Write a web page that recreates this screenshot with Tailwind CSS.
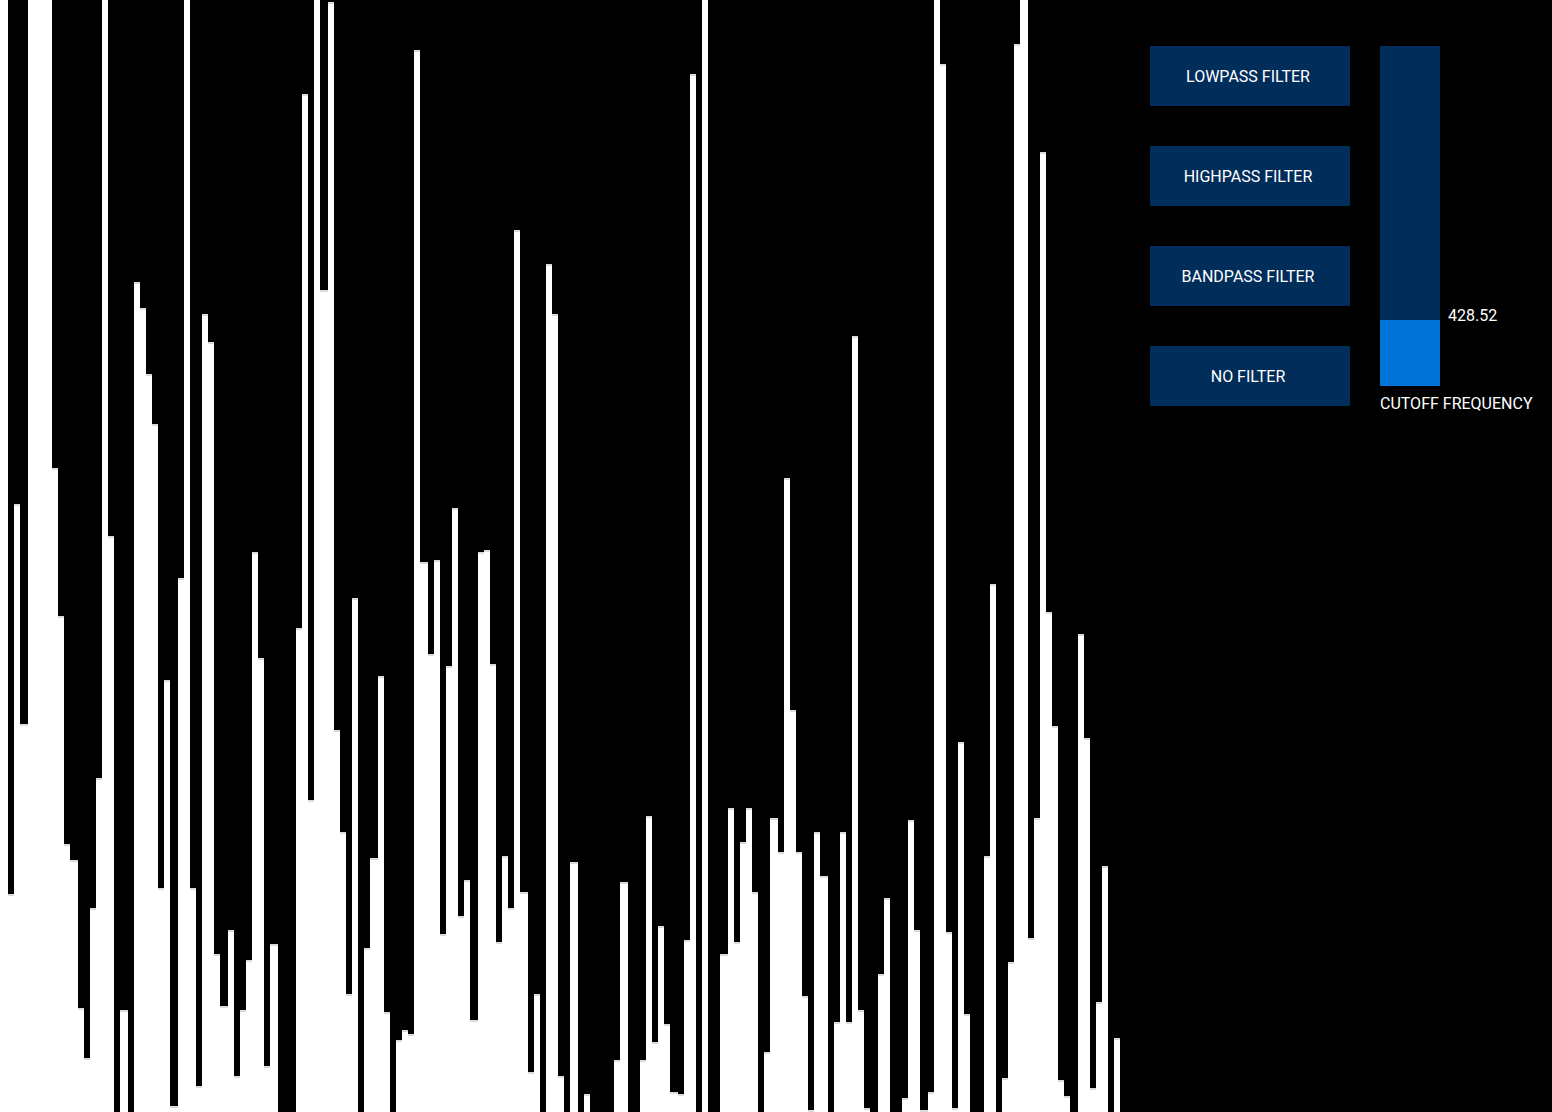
<!DOCTYPE html>
<html lang="en">

<head>
    <meta charset="UTF-8">
    <meta name="viewport" content="width=device-width, initial-scale=1.0">
    <title>Audio Filters</title>
    <script src="https://cdn.jsdelivr.net/npm/@tailwindcss/browser@4"></script>
</head>

<body class="bg-black text-white text-base font-['Roboto',sans-serif]">
    <main class="flex min-h-screen overflow-hidden">
        <!-- Frequency spectrum -->
        <div id="spectrum" class="flex shrink-0 h-screen overflow-hidden" role="img" aria-label="Frequency spectrum"></div>

        <!-- Filter controls -->
        <section class="flex items-start gap-[30px] pl-[30px] pt-[46px]">
            <div class="flex flex-col gap-10">
                <button type="button" class="w-[200px] h-[60px] pt-0.5 pr-1 bg-[#002d5a] hover:bg-[#0074d9]">LOWPASS FILTER</button>
                <button type="button" class="w-[200px] h-[60px] pt-0.5 pr-1 bg-[#002d5a] hover:bg-[#0074d9]">HIGHPASS FILTER</button>
                <button type="button" class="w-[200px] h-[60px] pt-0.5 pr-1 bg-[#002d5a] hover:bg-[#0074d9]">BANDPASS FILTER</button>
                <button type="button" class="w-[200px] h-[60px] pt-0.5 pr-1 bg-[#002d5a] hover:bg-[#0074d9]">NO FILTER</button>
            </div>
            <div class="flex flex-col items-start gap-[6px]">
                <div class="relative">
                    <input id="cutoff" type="range" min="50" max="2000" step="any" value="428.52" class="block w-[60px] h-[340px] appearance-none [writing-mode:vertical-lr] [direction:rtl] [&::-webkit-slider-thumb]:opacity-0">
                    <output id="cutoff_value" for="cutoff" class="absolute left-full ml-2 -mb-2">428.52</output>
                </div>
                <label for="cutoff" class="whitespace-nowrap">CUTOFF FREQUENCY</label>
            </div>
        </section>
    </main>

    <script>
        // Top edge of each band, null when the band is silent
        const bands = [
            0, 894, 504, 724,
            0, 0, 0, 0, 468, 616, 844, 860,
            1008, 1058, 908, 778, 0, 536, null, 1010,
            null, 282, 308, 374, 424, 888, 680, 1106,
            578, 0, 888, 1086, 314, 342, 954, 1006,
            930, 1076, 1010, 960, 552, 658, 1066, 944,
            null, null, null, 628, 94, 800, 0, 290,
            2, 730, 832, 994, 598, null, 948, 858,
            676, 1012, null, 1040, 1030, 1034, 50, 562,
            654, 560, 934, 666, 508, 916, 880, 1020,
            552, 550, 664, 942, 856, 908, 230, 892,
            1072, 994, null, 264, 314, 1076, null, 862,
            null, 1094, null, null, null, null, 1060, 882,
            null, null, 1060, 816, 1042, 926, 1024, 1092,
            1094, 940, 74, null, 0, null, null, 954,
            808, 942, 842, 808, 892, null, 1052, 818,
            852, 478, 710, 852, 996, 1110, 832, 876,
            null, 1022, 832, 1022, 336, 1010, 1108, null,
            974, 898, null, null, 1098, 820, 930, 1110,
            1092, 0, 64, 932, 1108, 742, 1014, null,
            null, 856, 584, null, 1078, 962, 44, 0,
            938, 818, 152, 612, 726, 1080, 1096, null,
            634, 738, 1088, 1002, 866, null, 1038
        ];

        const spectrum = document.getElementById('spectrum');
        bands.forEach((top, i) => {
            const bar = document.createElement('div');
            // Every eighth band is a little wider
            bar.style.width = (i === 0 || i % 8 === 3 ? 8 : 6) + 'px';
            if (top !== null) {
                bar.className = top > 0 ? 'bg-white border-t-2 border-[#dcdcdc]' : 'bg-white';
                bar.style.marginTop = top + 'px';
            }
            spectrum.appendChild(bar);
        });

        const cutoff = document.getElementById('cutoff');
        const cutoffValue = document.getElementById('cutoff_value');

        function updateCutoff() {
            const percent = (cutoff.value - cutoff.min) / (cutoff.max - cutoff.min) * 100;
            cutoff.style.background = `linear-gradient(to top, #0074d9 ${percent}%, #002d5a ${percent}%)`;
            cutoffValue.style.bottom = percent + '%';
            cutoffValue.textContent = Number(cutoff.value).toFixed(2);
        }

        cutoff.addEventListener('input', updateCutoff);
        updateCutoff();
    </script>
</body>

</html>
